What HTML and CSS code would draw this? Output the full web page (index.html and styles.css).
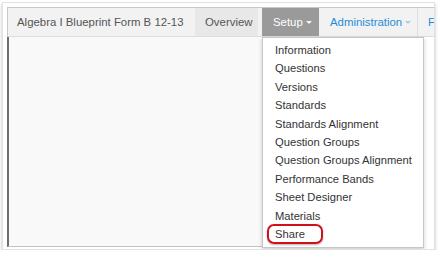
FILE: index.html
```html
<!doctype html>
<html lang="en">
  <head>
    <meta charset="UTF-8" />
    <meta name="viewport" content="width=device-width, initial-scale=1.0" />
    <title>Algebra I Blueprint Form B 12-13</title>
    <link rel="stylesheet" href="styles.css">
  </head>
  <body>
    <div class="shot">
      <nav class="navbar">
        <span class="brand">Algebra I Blueprint Form B 12-13</span>
        <a class="tab">Overview</a>
        <a class="tab active">Setup<span class="caret"></span></a>
        <a class="tab link">Administration<span class="caret"></span></a>
        <a class="tab link more">F</a>
      </nav>
      <div class="stage">
        <div class="panel"></div>
      </div>

      <ul class="menu">
        <li>Information</li>
        <li>Questions</li>
        <li>Versions</li>
        <li>Standards</li>
        <li>Standards Alignment</li>
        <li>Question Groups</li>
        <li>Question Groups Alignment</li>
        <li>Performance Bands</li>
        <li>Sheet Designer</li>
        <li>Materials</li>
        <li class="marked">Share</li>
      </ul>
    </div>
  </body>
</html>
```

FILE: styles.css
```css
body {
  margin: 0;
  background: #fff;
  font-family: "Liberation Sans", Arial, sans-serif;
  font-size: 11px;
  color: #333;
}

.shot {
  position: relative;
  width: 427px;
  height: 242px;
  margin: 2px 0 0 2px;
  padding: 4px 0 0 4px;
  border: 1px solid #e2e2e2;
  box-shadow: 0 2px 3px rgba(0, 0, 0, 0.25);
  overflow: hidden;
}

.navbar {
  display: flex;
  height: 30px;
  background: #f2f2f2;
  border-top: 1px solid #c8c8c8;
  border-left: 1px solid #c8c8c8;
  border-bottom: 1px solid #dcdcdc;
  box-sizing: border-box;
  white-space: nowrap;
  overflow: hidden;
}

.navbar > * {
  flex-shrink: 0;
}

.brand {
  display: flex;
  align-items: center;
  width: 187px;
  padding-left: 9px;
  box-sizing: border-box;
  font-size: 11.4px;
  color: #555;
}

.tab {
  display: flex;
  align-items: center;
  width: 63px;
  padding-left: 10px;
  box-sizing: border-box;
  font-size: 11.4px;
  color: #555;
  background: #e8e8e8;
}

.tab.active {
  width: 57px;
  padding-left: 11px;
  background: #9a9a9a;
  color: #fff;
  margin-left: 4px;
}

.tab.link {
  width: 98px;
  background: transparent;
  color: #1f8dd6;
  padding-left: 11px;
}

.tab.more {
  width: auto;
  border-left: 1px solid #dedede;
  padding-left: 10px;
}

.caret {
  display: inline-block;
  margin-left: 3px;
  border-top: 3px solid currentColor;
  border-left: 3px solid transparent;
  border-right: 3px solid transparent;
  opacity: 0.9;
}

.link .caret {
  opacity: 0.35;
}

.stage {
  height: 210px;
}

.panel {
  width: 417px;
  height: 100%;
  box-sizing: border-box;
  background: #f9f9f9;
  border-left: 2px solid #6e6e6e;
  border-right: 1px solid #bdbdbd;
  border-bottom: 1px solid #c4c4c4;
}

.menu {
  position: absolute;
  left: 259px;
  top: 34px;
  width: 162px;
  height: 211px;
  margin: 0;
  padding: 3px 0 0;
  list-style: none;
  box-sizing: border-box;
  background: #fff;
  border: 1px solid #c6c6c6;
  box-shadow: 0 2px 4px rgba(0, 0, 0, 0.2);
}

.menu li {
  height: 18.4px;
  line-height: 18.4px;
  padding-left: 12px;
  font-size: 11.2px;
  color: #333;
}

.menu .marked {
  width: 46px;
  height: 16px;
  line-height: 16px;
  margin: -1px 0 0 4px;
  padding-left: 6px;
  border: 2px solid #d0101a;
  border-radius: 7px;
  box-shadow: 0 1px 2px rgba(0, 0, 0, 0.3);
}
```
